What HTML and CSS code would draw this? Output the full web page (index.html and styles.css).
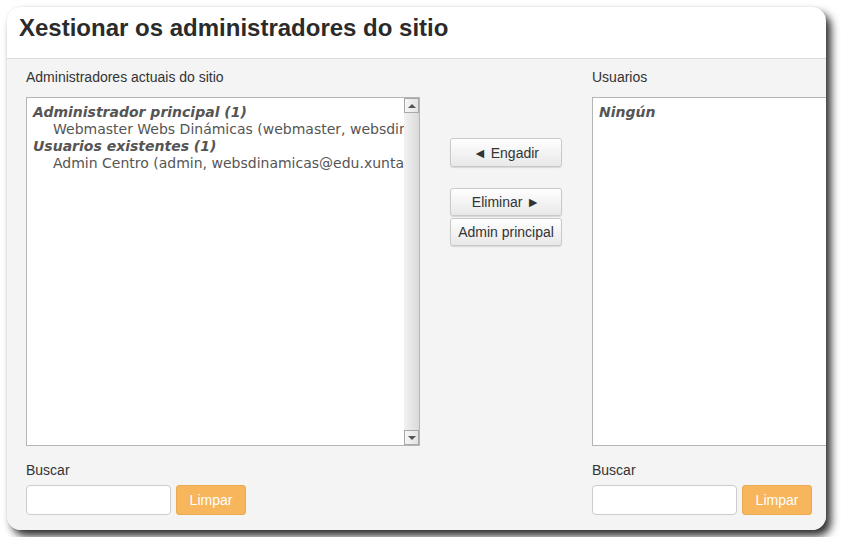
FILE: index.html
```html
<!DOCTYPE html>
<html lang="gl">
<head>
<meta charset="utf-8">
<title>Xestionar os administradores do sitio</title>
<link rel="stylesheet" href="styles.css">
</head>
<body>
<div class="card">
  <h1 class="title">Xestionar os administradores do sitio</h1>
  <div class="panel">
    <div class="col side">
      <div class="label">Administradores actuais do sitio</div>
      <div class="listbox">
        <div class="list-content">
          <div class="group">Administrador principal (1)</div>
          <div class="option">Webmaster Webs Dinámicas (webmaster, websdinamicas@edu.xunta.es)</div>
          <div class="group">Usuarios existentes (1)</div>
          <div class="option">Admin Centro (admin, websdinamicas@edu.xunta.es)</div>
        </div>
        <div class="scrollbar">
          <div class="sb-btn"><span class="arrow-up"></span></div>
          <div class="sb-track"></div>
          <div class="sb-btn"><span class="arrow-down"></span></div>
        </div>
      </div>
      <div class="label search-label">Buscar</div>
      <div class="search">
        <input class="search-input" type="text">
        <button class="clear-btn">Limpar</button>
      </div>
    </div>
    <div class="col mid">
      <button class="btn btn-add">&#9668; Engadir</button>
      <button class="btn btn-remove">Eliminar &#9658;</button>
      <button class="btn">Admin principal</button>
    </div>
    <div class="col side">
      <div class="label">Usuarios</div>
      <div class="listbox">
        <div class="list-content">
          <div class="group">Ningún</div>
        </div>
      </div>
      <div class="label search-label">Buscar</div>
      <div class="search">
        <input class="search-input" type="text">
        <button class="clear-btn">Limpar</button>
      </div>
    </div>
  </div>
</div>
</body>
</html>
```
FILE: styles.css
```css
html, body {
  margin: 0;
  padding: 0;
  background: #ffffff;
}
body {
  font-family: "Liberation Sans", Arial, sans-serif;
  color: #333;
}
.card {
  margin: 7px;
  width: 819px;
  height: 523px;
  background: #fff;
  border-radius: 14px;
  overflow: hidden;
  display: flex;
  flex-direction: column;
  box-shadow: 5px 6px 9px rgba(0, 0, 0, 0.82), 0 0 2px rgba(0, 0, 0, 0.08);
}
.title {
  margin: 0;
  padding: 7px 0 16px 12px;
  font-size: 24px;
  line-height: 28px;
  font-weight: bold;
  color: #2b2b2b;
}
.panel {
  flex: 1;
  background: #f4f4f4;
  border-top: 1px solid #dcdcdc;
  display: flex;
  gap: 30px;
  padding: 9px 0 0 19px;
}
.col {
  flex-shrink: 0;
  display: flex;
  flex-direction: column;
}
.side {
  width: 394px;
}
.label {
  font-size: 14px;
  line-height: 18px;
  color: #333;
}
.listbox {
  margin-top: 11px;
  height: 349px;
  box-sizing: border-box;
  border: 1px solid #b5b5b5;
  background: #fff;
  display: flex;
  overflow: hidden;
}
.list-content {
  flex: 1;
  min-width: 0;
  overflow: hidden;
  padding: 6px 0 0 6px;
  font-family: "DejaVu Sans", sans-serif;
  font-size: 14px;
  line-height: 17px;
  color: #555;
  white-space: nowrap;
}
.group {
  font-weight: bold;
  font-style: italic;
}
.option {
  padding-left: 20px;
}
.scrollbar {
  width: 15px;
  flex-shrink: 0;
  display: flex;
  flex-direction: column;
  background: linear-gradient(to right, #f2f2f2, #dadada);
}
.sb-btn {
  height: 15px;
  box-sizing: border-box;
  border: 1px solid #a8a8a8;
  background: linear-gradient(to right, #f7f7f7, #e2e2e2);
  display: flex;
  align-items: center;
  justify-content: center;
}
.sb-track {
  flex: 1;
}
.arrow-up {
  width: 0;
  height: 0;
  border-left: 4px solid transparent;
  border-right: 4px solid transparent;
  border-bottom: 4px solid #555;
}
.arrow-down {
  width: 0;
  height: 0;
  border-left: 4px solid transparent;
  border-right: 4px solid transparent;
  border-top: 4px solid #555;
}
.search-label {
  margin-top: 15px;
}
.search {
  margin-top: 6px;
  display: flex;
  gap: 5px;
}
.search-input {
  width: 145px;
  height: 30px;
  box-sizing: border-box;
  border: 1px solid #cccccc;
  border-radius: 4px;
  background: #fff;
  margin: 0;
  padding: 0 6px;
}
.clear-btn {
  width: 70px;
  height: 30px;
  box-sizing: border-box;
  margin: 0;
  border: 1px solid #ebaa52;
  border-radius: 3px;
  background: #f7b55c;
  color: #fff;
  font-family: "Liberation Sans", Arial, sans-serif;
  font-size: 14px;
}
.mid {
  width: 112px;
  padding-top: 70px;
}
.btn {
  width: 112px;
  height: 29px;
  box-sizing: border-box;
  margin: 0;
  padding: 0;
  border: 1px solid #c9c9c9;
  border-radius: 3px;
  background: linear-gradient(#ffffff, #e8e8e8);
  box-shadow: 0 1px 1px rgba(0, 0, 0, 0.12);
  font-family: "Liberation Sans", Arial, sans-serif;
  font-size: 14px;
  color: #333;
}
.btn-remove {
  margin-top: 21px;
  height: 28px;
}
.btn-remove + .btn {
  margin-top: 2px;
  height: 28px;
}
```
